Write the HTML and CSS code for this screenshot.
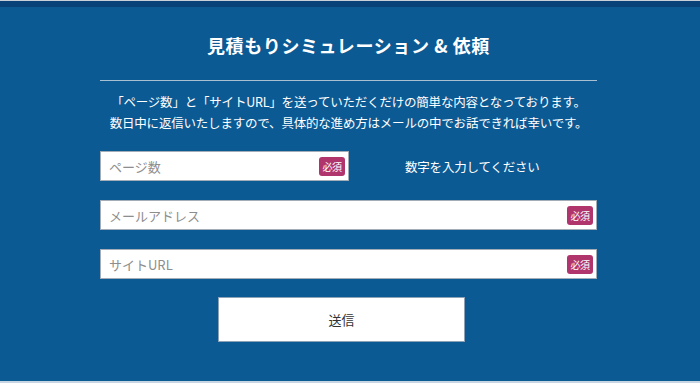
FILE: index.html
```html
<!DOCTYPE html>
<html lang="ja">
<head>
    <meta charset="UTF-8">
    <meta name="viewport" content="width=device-width, initial-scale=1.0">
    <title>見積もりシミュレーション &amp; 依頼</title>
    <link rel="stylesheet" href="styles.css">
</head>
<body>
    <div id="topbar"></div>
    <div id="main">
        <div id="container">
            <h2 class="title">見積もりシミュレーション &amp; 依頼</h2>
            <hr class="line">
            <p class="lead">「ページ数」と「サイトURL」を送っていただくだけの簡単な内容となっております。<br>数日中に返信いたしますので、具体的な進め方はメールの中でお話できれば幸いです。</p>
            <form id="form">
                <div class="row">
                    <div class="field short">
                        <input type="text" placeholder="ページ数">
                        <span class="req">必須</span>
                    </div>
                    <span class="hint">数字を入力してください</span>
                </div>
                <div class="row">
                    <div class="field">
                        <input type="text" placeholder="メールアドレス">
                        <span class="req">必須</span>
                    </div>
                </div>
                <div class="row">
                    <div class="field">
                        <input type="text" placeholder="サイトURL">
                        <span class="req">必須</span>
                    </div>
                </div>
                <button type="button" class="btn">送信</button>
            </form>
        </div>
    </div>
    <div id="bottom"></div>
</body>
</html>
```

FILE: styles.css
```css
html, body{
    margin: 0;
    padding: 0;
    height: 100%;
}
body{
    display: flex;
    flex-direction: column;
    background-color: #0c5a94;
    font-family: "Noto Sans CJK JP", "Noto Sans", sans-serif;
    color: #ffffff;
}
#topbar{
    height: 6px;
    border-top: 1px solid #c9d0d8;
    background-color: #094279;
}
#main{
    flex: 1;
}
#bottom{
    height: 2px;
    background-color: #c6d5e1;
}
#container{
    width: 497px;
    margin-left: 100px;
}
.title{
    margin: 0;
    padding-top: 25px;
    font-size: 18px;
    line-height: 26px;
    font-weight: bold;
    text-align: center;
    letter-spacing: 0.6px;
}
.line{
    margin: 22px 0 0;
    border: 0;
    height: 1px;
    background-color: #a9bfd2;
}
.lead{
    margin: 10px 0 0;
    font-size: 12.5px;
    line-height: 21px;
    text-align: center;
    white-space: nowrap;
    letter-spacing: -0.2px;
}
#form{
    margin-top: 18px;
}
.row{
    display: flex;
    align-items: center;
    margin-bottom: 19px;
}
.field{
    flex: 1;
    display: flex;
    align-items: center;
    height: 28px;
    background-color: #ffffff;
    border: 1px solid #a3adb8;
    padding-right: 3px;
}
.field.short{
    flex: none;
    width: 244px;
}
.field input{
    flex: 1;
    min-width: 0;
    border: 0;
    outline: none;
    background: transparent;
    padding: 0 0 0 8px;
    font-family: inherit;
    font-size: 13px;
    color: #333333;
}
.field input::placeholder{
    color: #8d8d8d;
}
.req{
    width: 26px;
    height: 19px;
    line-height: 19px;
    border-radius: 3px;
    background-color: #b0356c;
    color: #ffffff;
    font-size: 10px;
    text-align: center;
    letter-spacing: -0.5px;
}
.hint{
    margin-left: 56px;
    font-size: 12.5px;
    letter-spacing: -0.2px;
}
.btn{
    display: block;
    width: 247px;
    height: 45px;
    margin: -1px 0 0 118px;
    background-color: #ffffff;
    border: 1px solid #8da2b6;
    font-family: inherit;
    font-size: 13px;
    color: #333333;
    cursor: pointer;
}
```
